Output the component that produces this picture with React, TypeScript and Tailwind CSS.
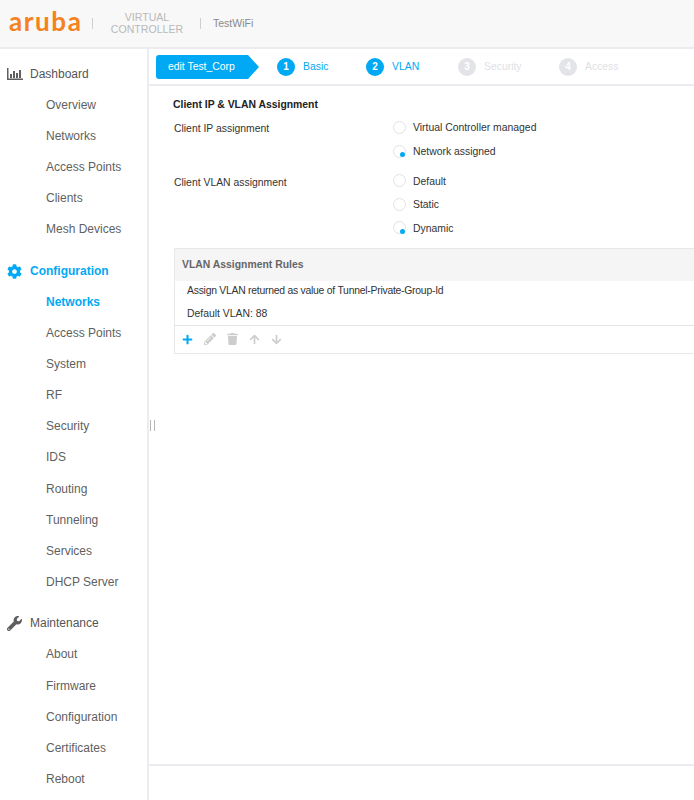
import { FaArrowDown, FaArrowUp, FaCog, FaPencilAlt, FaPlus, FaTrash, FaWrench } from 'react-icons/fa'
import type { ReactNode } from 'react'

function BarsIcon() {
  return (
    <svg className="w-[16px] h-[14px] text-[#5f5f5f]" viewBox="0 0 16 14" fill="currentColor">
      <rect x="0" y="1" width="1.5" height="12" />
      <rect x="0" y="11.5" width="16" height="1.5" />
      <rect x="3" y="7" width="2" height="4" />
      <rect x="6" y="4" width="2" height="7" />
      <rect x="9" y="6" width="2" height="5" />
      <rect x="12" y="3" width="2" height="8" />
    </svg>
  )
}

function NavGroup({ icon, title, items, active, activeItem }: { icon: ReactNode; title: string; items: string[]; active?: boolean; activeItem?: string }) {
  return (
    <div className="mb-[10px]">
      <div className={`flex items-center h-[31px] pl-[7px] ${active ? 'text-[#01a9f4] font-bold pt-[2px]' : 'text-[#555]'}`}>
        <span className="w-[23px] flex items-center">{icon}</span>
        <span>{title}</span>
      </div>
      {items.map((item) => (
        <div key={item} className={`flex items-center h-[31.2px] pl-[46px] ${item === activeItem ? 'text-[#01a9f4] font-bold' : 'text-[#5f5f5f]'}`}>
          {item}
        </div>
      ))}
    </div>
  )
}

function Step({ n, label, on, width }: { n: number; label: string; on?: boolean; width: string }) {
  return (
    <div className={`flex items-center ${width}`}>
      <span className={`w-[18px] h-[18px] rounded-full flex items-center justify-center text-[10px] font-bold text-white ${on ? 'bg-[#01a9f4]' : 'bg-[#e3e4e8]'}`}>{n}</span>
      <span className={`ml-[8px] text-[10.4px] ${on ? 'text-[#01a9f4]' : 'text-[#e0e1e5]'}`}>{label}</span>
    </div>
  )
}

function Radio({ label, checked, className }: { label: string; checked?: boolean; className: string }) {
  return (
    <div className={`flex items-center ${className}`}>
      <span className="relative w-[13px] h-[13px] rounded-full border border-[#e2e2e4] mr-[7px]">
        {checked && <span className="absolute left-[5.5px] top-[6.5px] w-[5px] h-[5px] rounded-full bg-[#01a9f4]" />}
      </span>
      <span className="pt-[2px]">{label}</span>
    </div>
  )
}

export default function App() {
  return (
    <div className="w-[694px] h-[800px] overflow-hidden bg-white text-[12px] text-[#333] font-['Liberation_Sans',Arial,sans-serif]">
      <header className="h-[49px] bg-[#f8f8f8] border-b-2 border-[#ececf0] flex items-center">
        <span className="ml-[9px] w-[73px] text-[#f58220] text-[26px] font-bold leading-none tracking-[1.6px] font-['Lato',sans-serif] pb-[5px]">aruba</span>
        <span className="ml-[10px] w-px h-[11px] bg-[#cfcfcf]" />
        <div className="ml-[17px] w-[74px] pb-[2px] text-center text-[10.6px] leading-[12px] text-[#b9b9b9]">VIRTUAL CONTROLLER</div>
        <span className="ml-[16px] w-px h-[11px] bg-[#cfcfcf]" />
        <span className="ml-[12px] text-[10.5px] text-[#8a8a8a]">TestWiFi</span>
      </header>

      <div className="flex h-[751px]">
        <aside className="w-[149px] shrink-0 border-r-2 border-[#ececf0] pt-[9px]">
          <NavGroup icon={<BarsIcon />} title="Dashboard" items={['Overview', 'Networks', 'Access Points', 'Clients', 'Mesh Devices']} />
          <NavGroup
            icon={<FaCog className="w-[15px] h-[15px]" />}
            title="Configuration"
            active
            activeItem="Networks"
            items={['Networks', 'Access Points', 'System', 'RF', 'Security', 'IDS', 'Routing', 'Tunneling', 'Services', 'DHCP Server']}
          />
          <NavGroup icon={<FaWrench className="w-[15px] h-[15px] text-[#5f5f5f]" />} title="Maintenance" items={['About', 'Firmware', 'Configuration', 'Certificates', 'Reboot']} />
        </aside>

        <main className="relative flex-1 min-w-0 flex flex-col">
          <div className="h-[37px] shrink-0 border-b-2 border-[#ececf0] flex items-center pl-[7px]">
            <div className="relative w-[92px] h-[24px] bg-[#01a9f4] rounded-l-[3px] text-white text-[10.4px] flex items-center pl-[12px]">
              edit Test_Corp
              <span className="absolute left-full top-0 border-y-[12px] border-y-transparent border-l-[11px] border-l-[#01a9f4]" />
            </div>
            <div className="flex ml-[29px]">
              <Step n={1} label="Basic" on width="w-[89px]" />
              <Step n={2} label="VLAN" on width="w-[92px]" />
              <Step n={3} label="Security" width="w-[101px]" />
              <Step n={4} label="Access" width="w-[90px]" />
            </div>
          </div>

          <div className="flex-1 pl-[25px] pt-[12px] text-[10.4px]">
            <h2 className="ml-[-1px] font-bold text-[#222] leading-[14px]">Client IP &amp; VLAN Assignment</h2>
            <div className="flex mt-[3px]">
              <div className="w-[219px] pt-[7px] leading-[14px]">Client IP assignment</div>
              <div>
                <Radio label="Virtual Controller managed" className="h-[24px]" />
                <Radio label="Network assigned" checked className="h-[24px]" />
              </div>
            </div>
            <div className="flex mt-[6px]">
              <div className="w-[219px] pt-[7px] leading-[14px]">Client VLAN assignment</div>
              <div>
                <Radio label="Default" className="h-[23.5px]" />
                <Radio label="Static" className="h-[23.5px]" />
                <Radio label="Dynamic" checked className="h-[23.5px]" />
              </div>
            </div>

            <section className="mt-[8px] border border-[#e8e8e8] border-r-0">
              <div className="h-[32px] bg-[#f5f5f5] flex items-center pl-[7px] font-bold text-[#666]">VLAN Assignment Rules</div>
              <div className="border-b border-[#e4e4e4] pl-[12px] h-[45px]">
                <div className="h-[20px] flex items-center tracking-[-0.25px]">Assign VLAN returned as value of Tunnel-Private-Group-Id</div>
                <div className="h-[23px] flex items-center mt-[2px]">Default VLAN: 88</div>
              </div>
              <div className="h-[27px] flex items-center pl-[7px] gap-[11px] text-[#cdcdcd]">
                <FaPlus className="w-[11px] h-[11px] text-[#01a9f4]" />
                <FaPencilAlt className="w-[12px] h-[12px]" />
                <FaTrash className="w-[11px] h-[12px]" />
                <FaArrowUp className="w-[11px] h-[11px]" />
                <FaArrowDown className="w-[11px] h-[11px]" />
              </div>
            </section>
          </div>

          <div className="h-[36px] shrink-0 border-t-2 border-[#ececf0]" />
          <span className="absolute left-[1px] top-[371px] w-[5px] h-[11px] border-x border-[#b5b5b5]" />
        </main>
      </div>
    </div>
  )
}
